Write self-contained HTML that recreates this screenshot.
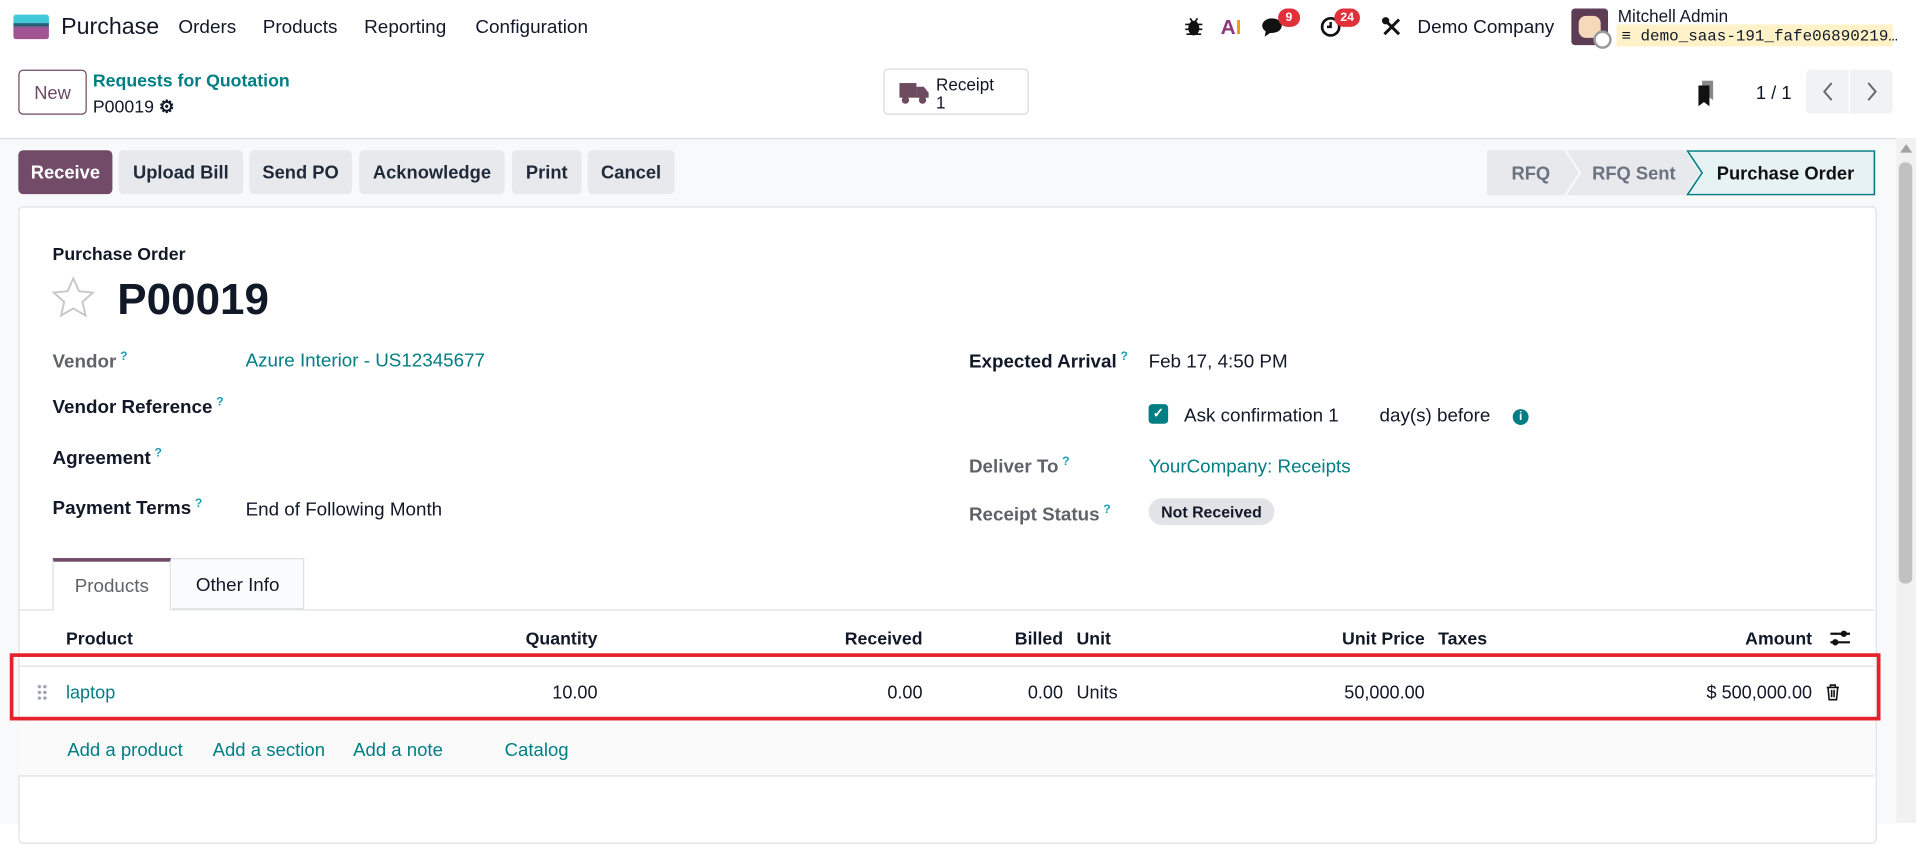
<!DOCTYPE html>
<html><head><meta charset="utf-8">
<style>
html,body{margin:0;padding:0;width:1916px;height:823px;overflow:hidden;background:#fff}
#w{position:absolute;left:0;top:0;width:1568px;height:674px;transform:scale(1.2219,1.2211);transform-origin:0 0;font-family:"Liberation Sans",sans-serif;color:#111827;font-size:15.4px}
.a{position:absolute;white-space:nowrap}
.teal{color:#017e84}
.lbl{font-weight:bold;color:#111827}
.lblg{font-weight:bold;color:#5f6368}
sup{color:#17a2b8;font-size:10px;font-weight:bold;margin-left:3px}
.btn{position:absolute;top:123px;height:36px;line-height:37px;background:#e7e9ed;border-radius:4px;font-weight:bold;font-size:15px;text-align:center;color:#1f2937}
.th{position:absolute;top:516px;font-weight:bold;font-size:14.5px}
.td{position:absolute;top:560px;font-size:14.8px}
.lnk{position:absolute;top:606px;color:#017e84;font-size:15.2px}
</style></head><body><div id="w">
<!-- navbar -->
<div class="a" style="left:11px;top:12px;width:29px;height:8px;background:#3fc9d9;border-radius:2px 2px 0 0"></div>
<div class="a" style="left:11px;top:19px;width:29px;height:3px;background:#2c5b74"></div>
<div class="a" style="left:11px;top:22px;width:29px;height:10px;background:#a15392;border-radius:0 0 2px 2px"></div>
<div class="a" style="left:50px;top:12px;font-size:19px">Purchase</div>
<div class="a" style="left:146px;top:14px;font-size:15.5px">Orders</div>
<div class="a" style="left:215px;top:14px;font-size:15.5px">Products</div>
<div class="a" style="left:298px;top:14px;font-size:15.5px">Reporting</div>
<div class="a" style="left:389px;top:14px;font-size:15.5px">Configuration</div>
<svg class="a" style="left:969px;top:13px" width="16" height="17"><ellipse cx="8" cy="10" rx="4.5" ry="6" fill="#111"/><path d="M1 7h14M1 11h14M2 15h12M5 2l2 3M11 2l-2 3" stroke="#111" stroke-width="1.4"/></svg>
<div class="a" style="left:999px;top:13px;font-size:17px;font-weight:bold;color:#8a3b7b">A<span style="color:#f39c12">I</span></div>
<svg class="a" style="left:1032px;top:13px" width="22" height="20"><ellipse cx="9" cy="8" rx="8" ry="6" fill="#111"/><path d="M4 12 L3 17 L9 13Z" fill="#111"/></svg>
<div class="a" style="left:1046px;top:7px;background:#e0303a;color:#fff;border-radius:9px;font-size:10px;font-weight:bold;padding:2px 6px">9</div>
<svg class="a" style="left:1080px;top:12px" width="20" height="20"><circle cx="9" cy="10" r="7" fill="none" stroke="#111" stroke-width="2.2"/><path d="M9 6v4h-3" stroke="#111" stroke-width="2" fill="none"/></svg>
<div class="a" style="left:1092px;top:7px;background:#e0303a;color:#fff;border-radius:9px;font-size:10px;font-weight:bold;padding:2px 5px">24</div>
<svg class="a" style="left:1130px;top:13px" width="18" height="18"><path d="M3 15L15 3M3 3l12 12" stroke="#111" stroke-width="2.4"/><circle cx="4" cy="4" r="3" fill="#111"/></svg>
<div class="a" style="left:1160px;top:14px;font-size:15.5px">Demo Company</div>
<div class="a" style="left:1286px;top:7px;width:30px;height:30px;background:#5d3d56;border-radius:3px"></div>
<div class="a" style="left:1292px;top:13px;width:18px;height:18px;background:#f5d9b8;border-radius:6px"></div>
<div class="a" style="left:1304px;top:25px;width:11px;height:11px;border:2px solid #999;border-radius:50%;background:#fff"></div>
<div class="a" style="left:1324px;top:5px;font-size:14px">Mitchell Admin</div>
<div class="a" style="left:1323px;top:20px;width:226px;height:18px;background:#fff2c8"></div>
<div class="a" style="left:1327px;top:22px;font-family:'Liberation Mono',monospace;font-size:13px">≡ demo_saas-191_fafe06890219…</div>
<!-- control panel -->
<div class="a" style="left:15px;top:57px;width:54px;height:35px;border:1px solid #6b4a63;border-radius:4px;line-height:37px;text-align:center;color:#6b4a63;font-size:15px">New</div>
<div class="a teal" style="left:76px;top:59px;font-weight:bold;font-size:14.5px">Requests for Quotation</div>
<div class="a" style="left:76px;top:80px;font-size:14.5px">P00019 <b>⚙</b></div>
<div class="a" style="left:723px;top:56px;width:117px;height:36px;border:1px solid #d8dadd;border-radius:4px"></div>
<svg class="a" style="left:736px;top:66px" width="26" height="20"><rect x="0" y="2" width="14" height="12" fill="#6e4c5f"/><path d="M14 5h6l4 5v4H14z" fill="#6e4c5f"/><circle cx="5" cy="16" r="3" fill="#6e4c5f"/><circle cx="19" cy="16" r="3" fill="#6e4c5f"/></svg>
<div class="a" style="left:766px;top:62px;font-size:14px;line-height:15px">Receipt<br>1</div>
<svg class="a" style="left:1388px;top:66px" width="20" height="22"><path d="M5 0h9v16l-4-3-5 3z" fill="#888"/><path d="M2 4h9v17l-4.5-3.5L2 21z" fill="#111"/></svg>
<div class="a" style="left:1437px;top:68px;font-size:15px">1 / 1</div>
<div class="a" style="left:1478px;top:57px;width:35px;height:36px;background:#f1f2f4;border-radius:4px 0 0 4px"></div>
<div class="a" style="left:1514px;top:57px;width:35px;height:36px;background:#f1f2f4;border-radius:0 4px 4px 0"></div>
<svg class="a" style="left:1478px;top:57px" width="72" height="36"><path d="M21 11l-6 7 6 7M51 11l6 7-6 7" stroke="#666" stroke-width="1.6" fill="none"/></svg>
<!-- main gray area -->
<div class="a" style="left:0;top:113px;width:1552px;height:561px;background:#f8f9fa;border-top:1px solid #d8dadd"></div>
<div class="a" style="left:1552px;top:113px;width:16px;height:561px;background:#f1f1f1"></div>
<div class="a" style="left:1554px;top:133px;width:11px;height:345px;background:#c1c1c1;border-radius:5px"></div>
<div class="a" style="left:1555px;top:118px;width:0;height:0;border-left:5px solid transparent;border-right:5px solid transparent;border-bottom:7px solid #a3a3a3"></div>
<div class="btn" style="left:15px;width:77px;background:#714b67;color:#fff">Receive</div>
<div class="btn" style="left:97px;width:102px">Upload Bill</div>
<div class="btn" style="left:204px;width:84px">Send PO</div>
<div class="btn" style="left:294px;width:119px">Acknowledge</div>
<div class="btn" style="left:419px;width:57px">Print</div>
<div class="btn" style="left:481px;width:71px">Cancel</div>
<svg class="a" style="left:1217px;top:123px" width="318" height="37">
<path d="M0 0H63L75 18.5L63 37H0Z" fill="#e7e9ed"/>
<path d="M65 0H162L174 18.5L162 37H65L77 18.5Z" fill="#e7e9ed"/>
<path d="M164 0.6H317V36.4H164L176 18.5Z" fill="#e6f2f3" stroke="#017e84" stroke-width="1.3"/>
<text x="20" y="24" font-family="Liberation Sans" font-size="15" font-weight="bold" fill="#6b7280">RFQ</text>
<text x="86" y="24" font-family="Liberation Sans" font-size="15" font-weight="bold" fill="#6b7280">RFQ Sent</text>
<text x="188" y="24" font-family="Liberation Sans" font-size="15" font-weight="bold" fill="#111">Purchase Order</text>
</svg>
<!-- sheet -->
<div class="a" style="left:15px;top:169px;width:1519px;height:520px;background:#fff;border:1px solid #dee0e3;border-radius:4px"></div>
<div class="a lbl" style="left:43px;top:201px;font-size:14.5px">Purchase Order</div>
<svg class="a" style="left:42px;top:226px" width="36" height="36"><path d="M18 2l4.7 10.5 11.3 1.1-8.5 7.6 2.5 11.2L18 26.6 8 32.4l2.5-11.2L2 13.6l11.3-1.1z" fill="none" stroke="#c8c8c8" stroke-width="1.6"/></svg>
<div class="a" style="left:96px;top:224px;font-size:36px;font-weight:bold">P00019</div>
<div class="a lblg" style="left:43px;top:287px">Vendor<sup>?</sup></div>
<div class="a teal" style="left:201px;top:287px">Azure Interior - US12345677</div>
<div class="a lbl" style="left:43px;top:324px">Vendor Reference<sup>?</sup></div>
<div class="a lbl" style="left:43px;top:366px">Agreement<sup>?</sup></div>
<div class="a lbl" style="left:43px;top:407px">Payment Terms<sup>?</sup></div>
<div class="a" style="left:201px;top:409px">End of Following Month</div>
<div class="a lbl" style="left:793px;top:287px">Expected Arrival<sup>?</sup></div>
<div class="a" style="left:940px;top:288px">Feb 17, 4:50 PM</div>
<div class="a" style="left:940px;top:331px;width:16px;height:16px;background:#017e84;border-radius:3px;color:#fff;font-size:11px;line-height:16px;text-align:center;font-weight:bold">✓</div>
<div class="a" style="left:969px;top:332px">Ask confirmation 1</div>
<div class="a" style="left:1129px;top:332px">day(s) before</div>
<div class="a" style="left:1238px;top:335px;width:13px;height:13px;border-radius:50%;background:#017e84;color:#fff;font-size:10px;font-weight:bold;text-align:center;line-height:13px">i</div>
<div class="a lblg" style="left:793px;top:373px">Deliver To<sup>?</sup></div>
<div class="a teal" style="left:940px;top:374px">YourCompany: Receipts</div>
<div class="a lblg" style="left:793px;top:412px">Receipt Status<sup>?</sup></div>
<div class="a" style="left:940px;top:408px;width:103px;height:22px;background:#e1e3e6;border-radius:11px;font-size:13px;font-weight:bold;text-align:center;line-height:23px">Not Received</div>
<!-- tabs -->
<div class="a" style="left:15px;top:499px;width:1519px;height:1px;background:#dee0e3"></div>
<div class="a" style="left:43px;top:457px;width:97px;height:43px;background:#fff;border:1px solid #dee0e3;border-bottom:none;border-top:3px solid #714b67;box-sizing:border-box;text-align:center;line-height:42px;color:#5f6368">Products</div>
<div class="a" style="left:141px;top:457px;width:108px;height:42px;background:#fafbfc;border:1px solid #dee0e3;border-left:none;box-sizing:border-box;text-align:center;line-height:44px">Other Info</div>
<!-- table -->
<div class="th" style="left:54px">Product</div>
<div class="th" style="right:1079px">Quantity</div>
<div class="th" style="right:813px">Received</div>
<div class="th" style="right:698px">Billed</div>
<div class="th" style="left:881px">Unit</div>
<div class="th" style="right:402px">Unit Price</div>
<div class="th" style="left:1177px">Taxes</div>
<div class="th" style="right:85px">Amount</div>
<svg class="a" style="left:1497px;top:515px" width="18" height="16"><path d="M1 4h16M1 11h16" stroke="#111" stroke-width="1.8"/><circle cx="12" cy="4" r="2.6" fill="#111"/><circle cx="5" cy="11" r="2.6" fill="#111"/></svg>
<div class="a" style="left:15px;top:545px;width:1519px;height:1px;background:#dee0e3"></div>
<div class="a" style="left:15px;top:589px;width:1519px;height:46px;background:#fafafb;border-bottom:1px solid #dee0e3"></div>
<div class="a" style="left:30px;top:560px;width:9px;height:14px;background:radial-gradient(circle,#9ca3af 1.3px,transparent 1.5px) 0 0/4.5px 4.7px"></div>
<div class="td teal" style="left:54px">laptop</div>
<div class="td" style="right:1079px">10.00</div>
<div class="td" style="right:813px">0.00</div>
<div class="td" style="right:698px">0.00</div>
<div class="td" style="left:881px">Units</div>
<div class="td" style="right:402px">50,000.00</div>
<div class="td" style="right:85px">$ 500,000.00</div>
<svg class="a" style="left:1494px;top:560px" width="12" height="14"><path d="M1 3h10M4 3V1h4v2M2 3l1 10h6l1-10M5 5v6M7 5v6" stroke="#111" stroke-width="1.3" fill="none"/></svg>
<div class="a" style="left:8px;top:535px;width:1525px;height:49px;border:3px solid #e8202a"></div>
<div class="lnk" style="left:55px">Add a product</div>
<div class="lnk" style="left:174px">Add a section</div>
<div class="lnk" style="left:289px">Add a note</div>
<div class="lnk" style="left:413px">Catalog</div>
</div></body></html>
